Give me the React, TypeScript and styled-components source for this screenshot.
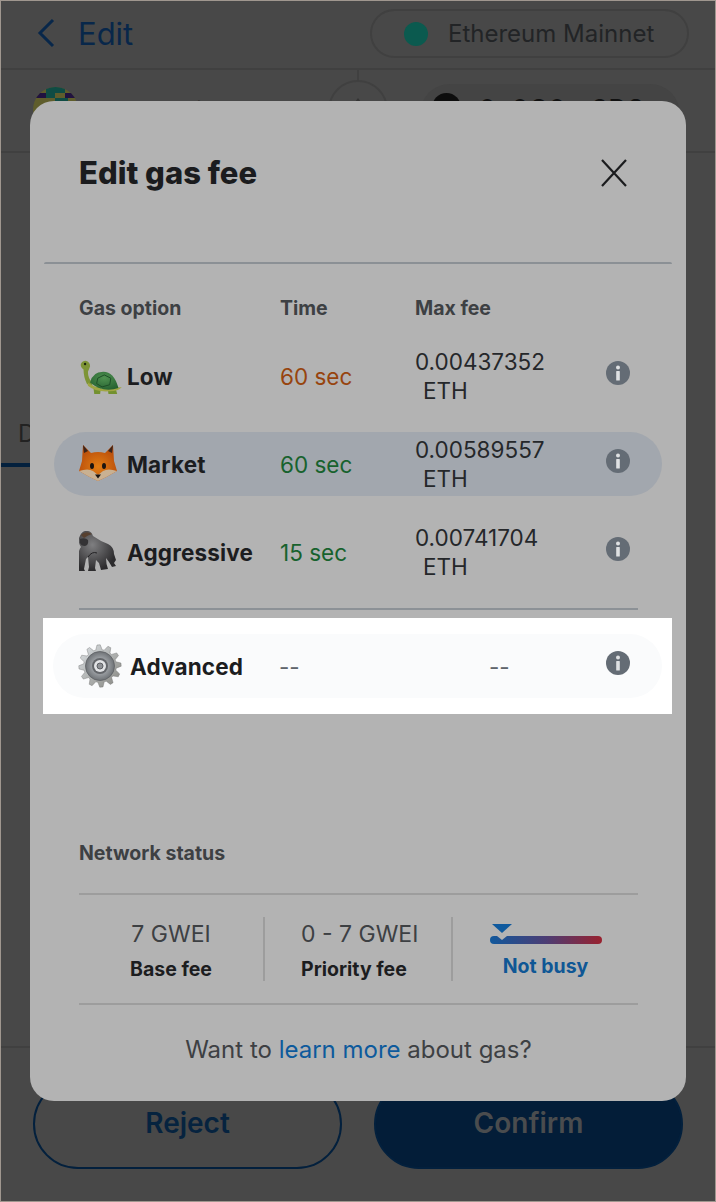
import React from "react"
import styled, { createGlobalStyle } from "styled-components"

const GlobalStyle = createGlobalStyle`
  html, body { margin: 0; padding: 0; }
  body { background: #484848; font-family: "Inter", "Liberation Sans", sans-serif; }
`

const Frame = styled.div`
  position: relative;
  width: 716px;
  height: 1202px;
  box-sizing: border-box;
  border: 1px solid #a0978f;
  background: #484848;
  overflow: hidden;
  display: flex;
  flex-direction: column;
`

const Header = styled.header`
  height: 67px;
  flex: none;
  box-sizing: content-box;
  display: flex;
  align-items: flex-start;
  justify-content: space-between;
  padding: 0 26px 0 35px;
  border-bottom: 2px solid #404040;
`

const Back = styled.div`
  display: flex;
  align-items: center;
  gap: 22px;
  height: 48px;
  margin-top: 8px;
  color: #08274a;
  font-size: 31px;
`

const NetworkPill = styled.div`
  width: 319px;
  height: 49px;
  margin-top: 8px;
  box-sizing: border-box;
  border: 2px solid #404040;
  border-radius: 25px;
  display: flex;
  align-items: center;
  gap: 20px;
  padding-left: 32px;
  font-size: 24px;
  color: #222426;
`

const NetworkDot = styled.span`
  width: 24px;
  height: 24px;
  border-radius: 50%;
  background: #0b5a4f;
`

const AccountRow = styled.div`
  height: 83px;
  flex: none;
  box-sizing: border-box;
  display: flex;
  align-items: flex-start;
  padding: 17px 0 0 32px;
  border-bottom: 2px solid #404040;
  color: #222;
  font-size: 24px;
  line-height: 30px;
`

const IdenticonWrap = styled.svg`
  width: 45px;
  height: 45px;
  flex: none;
`

const AccountName = styled.div`
  width: 218px;
  margin: 7px 0 0 32px;
  font-size: 22px;
`

const AccountArrow = styled.div`
  position: relative;
  width: 60px;
  height: 60px;
  flex: none;
  box-sizing: border-box;
  margin-top: -7px;
  border: 2px solid #404040;
  border-radius: 50%;

  &::before {
    content: "";
    position: absolute;
    left: 27px;
    top: -13px;
    width: 2px;
    height: 11px;
    background: #404040;
  }

  &::after {
    content: "";
    position: absolute;
    left: 19px;
    top: 16px;
    border-left: 9px solid transparent;
    border-right: 9px solid transparent;
    border-bottom: 12px solid #333333;
  }
`

const AddressPill = styled.div`
  width: 260px;
  height: 60px;
  margin: -3px 0 0 32px;
  flex: none;
  box-sizing: border-box;
  border-radius: 30px;
  background: #444444;
  display: flex;
  align-items: flex-start;
  gap: 18px;
  padding: 9px 0 0 12px;
  font-size: 25px;
  line-height: 32px;
  letter-spacing: 1px;
  font-weight: 600;
  color: #111;
`

const AddressDot = styled.div`
  width: 29px;
  height: 29px;
  flex: none;
  border-radius: 50%;
  background: #0d0d0d;
`

const Tabs = styled.div`
  flex: 1;
  padding: 266px 0 0 17px;
  color: #222;
  font-size: 24px;
  line-height: 30px;
`

const TabUnderline = styled.div`
  width: 44px;
  height: 4px;
  margin: 14px 0 0 -17px;
  background: #03203d;
`

const Footer = styled.footer`
  height: 155px;
  flex: none;
  box-sizing: border-box;
  border-top: 2px solid #404040;
  display: flex;
  justify-content: space-between;
  align-items: flex-start;
  padding: 31px 32px 0;
`

const FooterButton = styled.div<{ $filled?: boolean }>`
  width: 309px;
  height: 90px;
  box-sizing: border-box;
  border-radius: 45px;
  border: 2px solid #03203d;
  background: ${p => (p.$filled ? "#031d38" : "transparent")};
  color: ${p => (p.$filled ? "#4a4c4e" : "#06233f")};
  display: flex;
  align-items: center;
  justify-content: center;
  padding-bottom: 2px;
  font-size: 28px;
  font-weight: 600;
`

const Modal = styled.section`
  position: absolute;
  left: 29px;
  top: 100px;
  width: 656px;
  height: 1000px;
  border-radius: 24px;
  background: #b3b3b3;
  display: flex;
  flex-direction: column;
`

const ModalHead = styled.div`
  height: 161px;
  flex: none;
  box-sizing: border-box;
  padding: 50px 58px 0 49px;
  display: flex;
  justify-content: space-between;
  align-items: flex-start;
  color: #1b1c1e;
`

const Title = styled.h2`
  margin: 0;
  font-size: 31px;
  line-height: 44px;
  font-weight: 800;
`

const CloseIcon = styled.svg`
  width: 28px;
  height: 28px;
  margin-top: 8px;
`

const TopRule = styled.div`
  height: 2px;
  flex: none;
  margin: 0 14px;
  border-radius: 2px 2px 0 0;
  background: #8b9095;
`

const TableHead = styled.div`
  height: 46px;
  margin-top: 21px;
  flex: none;
  box-sizing: border-box;
  padding-left: 49px;
  display: grid;
  grid-template-columns: 201px 135px 1fr;
  align-items: center;
  color: #3d4043;
  font-size: 19.5px;
  font-weight: 700;
`

const GasRows = styled.div`
  display: flex;
  flex-direction: column;
  gap: 24px;
  margin: 13px 24px 0;
  flex: none;
`

const GasRow = styled.div<{ $active?: boolean; $plain?: boolean }>`
  height: 64px;
  border-radius: 32px;
  padding-left: 25px;
  display: grid;
  grid-template-columns: 201px 135px 1fr 58px;
  align-items: center;
  background: ${p => (p.$active ? "#a2a7ae" : p.$plain ? "#fafbfc" : "transparent")};
`

const OptionName = styled.div<{ $gap?: number }>`
  display: flex;
  align-items: center;
  gap: ${p => p.$gap ?? 4}px;
  font-size: 22.5px;
  font-weight: 700;
  letter-spacing: 0.15px;
  color: #1c1d1f;
  white-space: nowrap;
`

const Eta = styled.div<{ $tone: "slow" | "fast" | "none" }>`
  font-size: 22.5px;
  color: ${p => (p.$tone === "slow" ? "#97440e" : p.$tone === "fast" ? "#17622d" : "#5f656c")};
`

const Fee = styled.div`
  font-size: 22.5px;
  line-height: 29px;
  color: #25272a;
`

const FeeUnit = styled.span`
  display: block;
  padding-left: 8px;
`

const InfoIcon = styled.svg`
  width: 24px;
  height: 24px;
  justify-self: start;
  margin: -6px 0 0 2px;
`

const TableRule = styled.div`
  height: 2px;
  flex: none;
  margin: 24px 48px 0 49px;
  background: #8c9196;
`

const Spotlight = styled.div`
  flex: none;
  margin: 8px 14px 0 13px;
  padding: 16px 10px;
  height: 96px;
  box-sizing: border-box;
  background: #ffffff;
`

const AdvancedRow = styled(GasRow)`
  grid-template-columns: 201px 210px 1fr 58px;
`

const NetworkSection = styled.div`
  flex: 1;
  padding: 125px 48px 0 49px;
  display: flex;
  flex-direction: column;
`

const NetworkTitle = styled.div`
  height: 28px;
  font-size: 19.5px;
  line-height: 28px;
  font-weight: 700;
  color: #3d4043;
`

const Stats = styled.div`
  margin-top: 26px;
  height: 112px;
  box-sizing: border-box;
  border-top: 2px solid #9d9d9d;
  border-bottom: 2px solid #9d9d9d;
  padding: 22px 0;
  display: grid;
  grid-template-columns: 186px 188px 1fr;
`

const Stat = styled.div<{ $last?: boolean; $start?: boolean }>`
  height: 64px;
  display: flex;
  flex-direction: column;
  align-items: ${p => (p.$start ? "flex-start" : "center")};
  padding-left: ${p => (p.$start ? "36px" : "0")};
  border-right: ${p => (p.$last ? "none" : "2px solid #9d9d9d")};
`

const StatValue = styled.div`
  font-size: 23px;
  line-height: 34px;
  color: #3d4043;
`

const StatLabel = styled.div`
  margin-top: 3px;
  font-size: 19.5px;
  line-height: 30px;
  font-weight: 700;
  color: #1c1d1f;
`

const Meter = styled.div`
  position: relative;
  width: 112px;
  height: 8px;
  margin-top: 19px;
  border-radius: 4px;
  background: linear-gradient(90deg, #11589c 0%, #4c3d74 50%, #99222f 100%);
`

const MeterMark = styled.svg`
  position: absolute;
  left: 1px;
  top: -13px;
  width: 22px;
  height: 18px;
`

const MeterLabel = styled.div`
  margin-top: 8px;
  font-size: 19.5px;
  line-height: 28px;
  font-weight: 700;
  color: #0f5795;
`

const Learn = styled.div`
  margin-top: 28px;
  text-align: center;
  font-size: 24px;
  line-height: 34px;
  color: #3d4043;
`

const LearnLink = styled.a`
  color: #0d5a9c;
`

const Info = () => (
  <InfoIcon viewBox="0 0 24 24">
    <circle cx="12" cy="12" r="12" fill="#646c75" />
    <circle cx="12" cy="6.6" r="2" fill="#dfe1e3" />
    <rect x="10.2" y="10" width="3.6" height="9.5" rx="0.6" fill="#dfe1e3" />
  </InfoIcon>
)

const Identicon = () => (
  <IdenticonWrap viewBox="0 0 45 45">
    <defs>
      <clipPath id="idclip">
        <circle cx="22.5" cy="22.5" r="22.5" />
      </clipPath>
    </defs>
    <g clipPath="url(#idclip)">
      <rect width="45" height="45" fill="#5f5d2c" />
      <rect x="13" width="19" height="6" fill="#0f4c44" />
      <rect x="0" y="6" width="13" height="5" fill="#21123f" />
      <rect x="32" y="6" width="13" height="5" fill="#21123f" />
      <rect x="13" y="6" width="9" height="5" fill="#0f4c44" />
      <rect x="22" y="11" width="13" height="5" fill="#0f4c44" />
    </g>
  </IdenticonWrap>
)

const Turtle = () => (
  <svg width="44" height="36" viewBox="0 -2.5 40 33">
    <defs>
      <radialGradient id="shell" cx="50%" cy="35%" r="70%">
        <stop offset="0" stopColor="#4f9150" />
        <stop offset="1" stopColor="#24602f" />
      </radialGradient>
    </defs>
    <path d="M1.5 3 Q3 0 6 0 Q10 1 10 5 Q9 8 8 10 Q8 16 12 20 L12 25 L7 21 Q4 15 4 8 Q1 6 1.5 3Z" fill="#7d9436" />
    <path d="M13 24 H20 L19 32 Q16 34 14 32Z" fill="#73912f" />
    <path d="M26 24 H33 L35 31 Q31 34 27 32Z" fill="#73912f" />
    <path d="M8 20 Q18 28 33 25 L39 24 Q36 28 28 28 Q15 29 8 23Z" fill="#a0a644" />
    <path d="M10 20 Q12 10 22 10 Q32 10 36 25 Q22 30 10 20Z" fill="url(#shell)" />
    <path d="M17 16 L23 13 L29 16 L28 22 L21 24 L16 21Z" fill="none" stroke="#1e4e27" strokeWidth="0.9" />
    <circle cx="5.4" cy="3" r="1.1" fill="#1c2410" />
  </svg>
)

const Fox = () => (
  <svg width="44" height="38" viewBox="0 0 44 38">
    <defs>
      <radialGradient id="fur" cx="50%" cy="60%" r="60%">
        <stop offset="0" stopColor="#e17d13" />
        <stop offset="1" stopColor="#b64a0a" />
      </radialGradient>
    </defs>
    <path d="M4 0 L12 8 Q19 6 26 8 L34 0 L35 16 L38 26 Q28 32 19 36 Q10 32 0 26 L3 16Z" fill="url(#fur)" />
    <path d="M4 0 L9 6 L5 8Z" fill="#3a241b" />
    <path d="M34 0 L29 6 L33 8Z" fill="#3a241b" />
    <path d="M0 26 Q9 23 14 26 L19 30 L24 26 Q29 23 38 26 Q28 32 19 36 Q10 32 0 26Z" fill="#c9b192" />
    <ellipse cx="13" cy="21" rx="2" ry="3" fill="#1a1410" />
    <ellipse cx="25" cy="21" rx="2" ry="3" fill="#1a1410" />
    <path d="M16 29.5 H22 L19 33.5Z" fill="#1a1410" />
  </svg>
)

const Gorilla = () => (
  <svg width="44" height="42" viewBox="1 0 44 42">
    <defs>
      <radialGradient id="ape" cx="38%" cy="35%" r="65%">
        <stop offset="0" stopColor="#7f7f81" />
        <stop offset="1" stopColor="#2c2b2d" />
      </radialGradient>
    </defs>
    <path d="M7 0 Q13 -1 15 5 Q22 10 30 13 Q36 16 36 23 L38 29 L36 32 L38 35 L34 36 L31 31 L28 27 Q28 33 30 38 L23 39 L21 32 L18 29 L17 37 L18 40 L10 40 L11 36 L10 26 L8 28 L6 38 L7 40 L1 40 L0 28 Q0 20 3 16 Q0 12 1 7 Q3 1 7 0Z" fill="url(#ape)" />
    <path d="M3 4 Q8 -1 14 3 Q10 4 6 7Z" fill="#57402f" />
    <path d="M2 8 Q7 6 10 9 Q11 14 7 15 Q3 15 2 12Z" fill="#343335" />
    <path d="M10 26 Q14 20 19 22" stroke="#232224" strokeWidth="1" fill="none" />
  </svg>
)

// gear outline built from its teeth, the emoji has 12 of them
const gearPath = () => {
  const teeth = 12
  const pts: string[] = []
  for (let i = 0; i < teeth; i++) {
    const a = (i / teeth) * Math.PI * 2
    const step = (Math.PI * 2) / teeth
    const corners: [number, number][] = [
      [16.4, -0.5],
      [21.2, -0.27],
      [21.2, 0.02],
      [16.4, 0.25]
    ]
    corners.forEach(([r, off]) => {
      const t = a + off * step
      pts.push(`${(22 + r * Math.cos(t)).toFixed(2)} ${(22 + r * Math.sin(t)).toFixed(2)}`)
    })
  }
  return "M" + pts.join(" L") + "Z"
}

const Gear = () => (
  <svg width="44" height="44" viewBox="0 0 44 44">
    <defs>
      <linearGradient id="teeth" x1="0" y1="0" x2="1" y2="1">
        <stop offset="0" stopColor="#dde2e6" />
        <stop offset="1" stopColor="#85857f" />
      </linearGradient>
      <radialGradient id="disc" cx="50%" cy="50%" r="50%">
        <stop offset="0.4" stopColor="#a8acb0" />
        <stop offset="1" stopColor="#6e7276" />
      </radialGradient>
    </defs>
    <path d={gearPath()} fill="url(#teeth)" stroke="#6d6d6d" strokeWidth="0.4" />
    <circle cx="22" cy="22" r="14.5" fill="url(#disc)" stroke="#5e6165" strokeWidth="0.8" />
    <circle cx="22" cy="22" r="8" fill="#63666a" />
    <circle cx="22" cy="22" r="6" fill="#e2e4e6" />
    <circle cx="22" cy="22" r="3" fill="#8f9296" stroke="#5c5f63" strokeWidth="1" />
  </svg>
)

const options = [
  { name: "Low", icon: <Turtle />, eta: "60 sec", tone: "slow" as const, fee: "0.00437352" },
  { name: "Market", icon: <Fox />, eta: "60 sec", tone: "fast" as const, fee: "0.00589557", active: true },
  { name: "Aggressive", icon: <Gorilla />, eta: "15 sec", tone: "fast" as const, fee: "0.00741704" }
]

export default function App() {
  return (
    <Frame>
      <GlobalStyle />
      <Header>
        <Back>
          <svg width="20" height="30" viewBox="0 0 20 30" fill="none" stroke="#08274a" strokeWidth="3">
            <path d="M17 2 L4 15 L17 28" />
          </svg>
          Edit
        </Back>
        <NetworkPill>
          <NetworkDot />
          Ethereum Mainnet
        </NetworkPill>
      </Header>
      <AccountRow>
        <Identicon />
        <AccountName>Wallet Hill</AccountName>
        <AccountArrow />
        <AddressPill>
          <AddressDot />
          0x0C0...3D8
        </AddressPill>
      </AccountRow>
      <Tabs>
        D
        <TabUnderline />
      </Tabs>
      <Footer>
        <FooterButton>Reject</FooterButton>
        <FooterButton $filled>Confirm</FooterButton>
      </Footer>

      <Modal>
        <ModalHead>
          <Title>Edit gas fee</Title>
          <CloseIcon viewBox="0 0 28 28" stroke="#1b1c1e" strokeWidth="2.2">
            <path d="M2 1 L26 27 M26 1 L2 27" />
          </CloseIcon>
        </ModalHead>
        <TopRule />
        <TableHead>
          <span>Gas option</span>
          <span>Time</span>
          <span>Max fee</span>
        </TableHead>
        <GasRows>
          {options.map(o => (
            <GasRow key={o.name} $active={o.active}>
              <OptionName>
                {o.icon}
                {o.name}
              </OptionName>
              <Eta $tone={o.tone}>{o.eta}</Eta>
              <Fee>
                {o.fee}
                <FeeUnit>ETH</FeeUnit>
              </Fee>
              <Info />
            </GasRow>
          ))}
        </GasRows>
        <TableRule />
        <Spotlight>
          <AdvancedRow $plain>
            <OptionName $gap={8}>
              <Gear />
              Advanced
            </OptionName>
            <Eta $tone="none">--</Eta>
            <Eta $tone="none">--</Eta>
            <Info />
          </AdvancedRow>
        </Spotlight>
        <NetworkSection>
          <NetworkTitle>Network status</NetworkTitle>
          <Stats>
            <Stat>
              <StatValue>7 GWEI</StatValue>
              <StatLabel>Base fee</StatLabel>
            </Stat>
            <Stat $start>
              <StatValue>0 - 7 GWEI</StatValue>
              <StatLabel>Priority fee</StatLabel>
            </Stat>
            <Stat $last>
              <Meter>
                <MeterMark viewBox="0 0 22 18">
                  <path d="M1 1 H21 L11 10Z" fill="#0f5a9e" />
                  <path d="M6 13 H16 L11 17Z" fill="#b3b3b3" />
                </MeterMark>
              </Meter>
              <MeterLabel>Not busy</MeterLabel>
            </Stat>
          </Stats>
          <Learn>
            Want to <LearnLink>learn more</LearnLink> about gas?
          </Learn>
        </NetworkSection>
      </Modal>
    </Frame>
  )
}
